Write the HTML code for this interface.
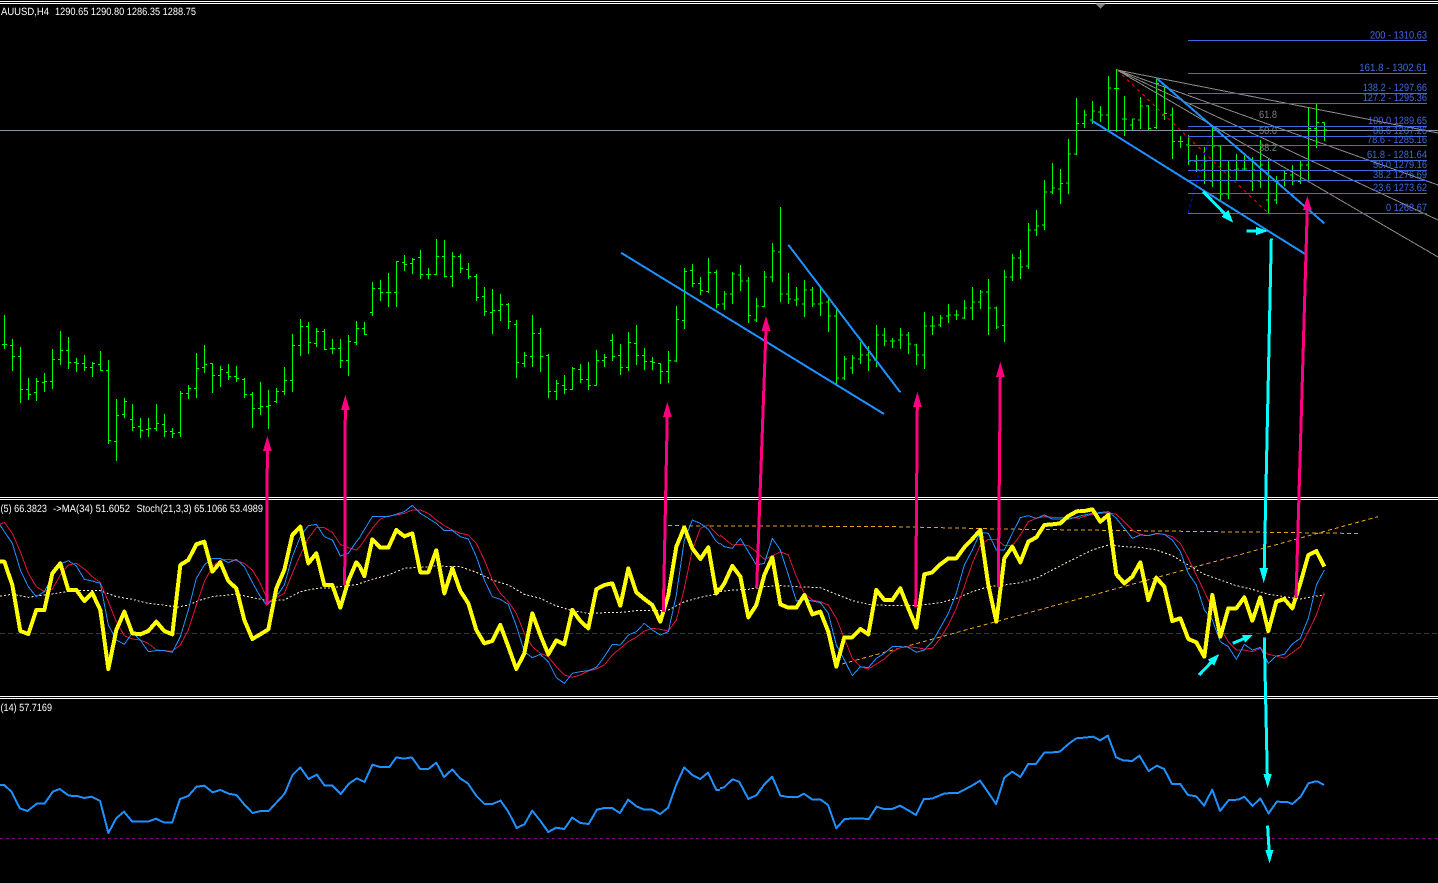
<!DOCTYPE html>
<html lang="en"><head><meta charset="utf-8"><title>AUDUSD H4</title>
<style>
html,body{margin:0;padding:0;background:#000;width:1438px;height:883px;overflow:hidden}
svg{display:block}
text{font-family:"Liberation Sans",sans-serif;font-size:10.5px;text-rendering:geometricPrecision}
.w text{fill:#fff}
.f text{fill:#4169e1}
.g text{fill:#808080}
</style></head><body>
<svg width="1438" height="883" viewBox="0 0 1438 883" xmlns="http://www.w3.org/2000/svg">
<rect width="1438" height="883" fill="#000"/>
<g shape-rendering="crispEdges">
<!-- separators -->
<g stroke="#fff" stroke-width="1">
<path d="M0 1.5H1438M0 3.5H1438M0 497.5H1438M0 499.5H1438M0 696.5H1438M0 698.5H1438"/>
</g>
<polygon points="1095.5,3.5 1105.5,3.5 1100.5,9" fill="#808080"/>
<!-- price line -->
<path d="M0 130.5H1438" stroke="#8494ac" stroke-width="1"/>
<!-- green bars -->
<g fill="none" stroke="#00ff00" stroke-width="3">
<g transform="translate(0 230) scale(.33333)"><path d="M13.5 255V357M6 343h7.5M13.5 343h7.5M37.5 327V423M30 346h7.5M37.5 379h7.5M61.5 351V519M54 379h7.5M61.5 478h7.5M85.5 444V510M78 478h7.5M85.5 493h7.5M109.5 444V513M102 487h7.5M109.5 454h7.5M133.5 429V486M126 457h7.5M133.5 454h7.5M157.5 357V477M150 454h7.5M157.5 388h7.5M181.5 303V405M174 388h7.5M181.5 361h7.5M205.5 321V417M198 361h7.5M205.5 397h7.5M229.5 384V426M222 397h7.5M229.5 400h7.5M253.5 375V423M246 400h7.5M253.5 412h7.5M277.5 396V441M270 412h7.5M277.5 400h7.5M301.5 363V423M294 403h7.5M301.5 421h7.5M325.5 390V642M318 421h7.5M325.5 631h7.5M349.5 507V693M342 634h7.5M349.5 556h7.5M373.5 504V564M366 553h7.5M373.5 514h7.5M397.5 522V603M390 568h7.5M397.5 592h7.5M421.5 564V624M414 589h7.5M421.5 601h7.5M445.5 564V621M438 598h7.5M445.5 595h7.5M469.5 522V603M462 595h7.5M469.5 580h7.5M493.5 552V621M486 583h7.5M493.5 604h7.5M517.5 594V624M510 604h7.5M517.5 610h7.5M541.5 483V621M534 607h7.5M541.5 490h7.5M565.5 465V507M558 490h7.5M565.5 475h7.5M589.5 369V504M582 475h7.5M589.5 415h7.5M613.5 345V429M606 412h7.5M613.5 403h7.5M637.5 399V489M630 400h7.5M637.5 436h7.5M661.5 408V471M654 436h7.5M661.5 418h7.5M685.5 402V450M678 427h7.5M685.5 439h7.5M709.5 408V456M702 439h7.5M709.5 445h7.5M733.5 444V504M726 448h7.5M733.5 493h7.5M757.5 486V594M750 493h7.5M757.5 535h7.5M781.5 456V555M774 535h7.5M781.5 529h7.5M805.5 480V597M798 529h7.5M805.5 526h7.5M829.5 474V519M822 514h7.5M829.5 484h7.5M853.5 411V495M846 484h7.5M853.5 451h7.5M877.5 312V486M870 451h7.5M877.5 346h7.5M901.5 267V378M894 346h7.5M901.5 289h7.5M925.5 276V372M918 289h7.5M925.5 337h7.5M949.5 294V351M942 340h7.5M949.5 304h7.5M973.5 297V360M966 304h7.5M973.5 358h7.5M997.5 327V372M990 355h7.5M997.5 355h7.5M1021.5 327V414M1014 355h7.5M1021.5 391h7.5M1045.5 315V438M1038 391h7.5M1045.5 334h7.5M1069.5 273V345M1062 337h7.5M1069.5 295h7.5"/></g>
<g transform="translate(360 200) scale(.33333)"><path d="M13.5 366V405M6 385h7.5M13.5 403h7.5M37.5 246V348M30 337h7.5M37.5 265h7.5M61.5 240V303M54 265h7.5M61.5 277h7.5M85.5 219V321M78 277h7.5M85.5 277h7.5M109.5 183V321M102 277h7.5M109.5 184h7.5M133.5 165V213M126 187h7.5M133.5 193h7.5M157.5 174V222M150 190h7.5M157.5 178h7.5M181.5 150V237M174 172h7.5M181.5 223h7.5M205.5 204V237M198 223h7.5M205.5 223h7.5M229.5 117V225M222 223h7.5M229.5 169h7.5M253.5 120V233M246 169h7.5M253.5 229h7.5M277.5 156V261M270 229h7.5M277.5 169h7.5M301.5 162V219M294 169h7.5M301.5 205h7.5M325.5 189V237M318 208h7.5M325.5 229h7.5M349.5 222V303M342 229h7.5M349.5 292h7.5M373.5 261V348M366 289h7.5M373.5 334h7.5M397.5 267V402M390 337h7.5M397.5 331h7.5M421.5 282V363M414 331h7.5M421.5 313h7.5M445.5 309V387M438 313h7.5M445.5 364h7.5M469.5 360V534M462 373h7.5M469.5 487h7.5M493.5 456V501M486 490h7.5M493.5 466h7.5M517.5 345V501M510 469h7.5M517.5 400h7.5M541.5 384V516M534 400h7.5M541.5 469h7.5M565.5 462V594M558 466h7.5M565.5 574h7.5M589.5 540V600M582 574h7.5M589.5 550h7.5M613.5 525V582M606 556h7.5M613.5 568h7.5M637.5 501V570M630 568h7.5M637.5 505h7.5M661.5 492V549M654 508h7.5M661.5 538h7.5M685.5 486V570M678 538h7.5M685.5 556h7.5M709.5 450V558M702 556h7.5M709.5 481h7.5M733.5 462V501M726 481h7.5M733.5 472h7.5M757.5 402V483M750 421h7.5M757.5 469h7.5M781.5 432V525M774 466h7.5M781.5 502h7.5M805.5 396V513M798 502h7.5M805.5 427h7.5M829.5 375V495M822 430h7.5M829.5 466h7.5M853.5 444V510M846 466h7.5M853.5 484h7.5M877.5 471V510M870 484h7.5M877.5 487h7.5M901.5 489V552M894 490h7.5M901.5 514h7.5M925.5 453V549M918 514h7.5M925.5 481h7.5M949.5 318V486M942 483h7.5M949.5 358h7.5M973.5 204V387M966 361h7.5M973.5 214h7.5M997.5 192V261M990 211h7.5M997.5 250h7.5M1021.5 231V285M1014 250h7.5M1021.5 271h7.5M1045.5 174V279M1038 274h7.5M1045.5 217h7.5M1069.5 210V325M1062 217h7.5M1069.5 313h7.5"/></g>
<g transform="translate(720 100) scale(.33333)"><path d="M13.5 573V630M6 612h7.5M13.5 582h7.5M37.5 516V612M30 582h7.5M37.5 522h7.5M61.5 495V573M54 525h7.5M61.5 543h7.5M85.5 531V669M78 543h7.5M85.5 646h7.5M109.5 594V666M102 660h7.5M109.5 618h7.5M133.5 513V621M126 619h7.5M133.5 531h7.5M157.5 429V546M150 531h7.5M157.5 453h7.5M181.5 321V606M174 456h7.5M181.5 582h7.5M205.5 519V612M198 582h7.5M205.5 597h7.5M229.5 561V618M222 600h7.5M229.5 597h7.5M253.5 540V651M246 612h7.5M253.5 570h7.5M277.5 561V621M270 570h7.5M277.5 612h7.5M301.5 561V648M294 612h7.5M301.5 609h7.5M325.5 594V696M318 606h7.5M325.5 648h7.5M349.5 624V852M342 648h7.5M349.5 834h7.5M373.5 768V840M366 834h7.5M373.5 777h7.5M397.5 765V822M390 804h7.5M397.5 774h7.5M421.5 726V792M414 777h7.5M421.5 765h7.5M445.5 738V813M438 765h7.5M445.5 780h7.5M469.5 675V801M462 780h7.5M469.5 705h7.5M493.5 684V738M486 705h7.5M493.5 723h7.5M517.5 714V744M510 723h7.5M517.5 723h7.5M541.5 684V747M534 720h7.5M541.5 705h7.5M565.5 696V762M558 705h7.5M565.5 732h7.5M589.5 732V795M582 735h7.5M589.5 765h7.5M613.5 636V807M606 765h7.5M613.5 678h7.5M637.5 648V705M630 678h7.5M637.5 678h7.5M661.5 645V681M654 675h7.5M661.5 654h7.5M685.5 612V669M678 648h7.5M685.5 645h7.5M709.5 630V660M702 645h7.5M709.5 645h7.5M733.5 600V657M726 654h7.5M733.5 624h7.5M757.5 561V660M750 624h7.5M757.5 606h7.5M781.5 570V627M774 606h7.5M781.5 576h7.5M805.5 537V705M798 576h7.5M805.5 624h7.5M829.5 620V687M822 624h7.5M829.5 681h7.5M853.5 510V726M846 676h7.5M853.5 531h7.5M877.5 462V543M870 531h7.5M877.5 474h7.5M901.5 450V537M894 474h7.5M901.5 501h7.5M925.5 369V507M918 498h7.5M925.5 390h7.5M949.5 330V408M942 390h7.5M949.5 378h7.5M973.5 240V390M966 375h7.5M973.5 276h7.5M997.5 189V282M990 276h7.5M997.5 264h7.5M1021.5 207V312M1014 267h7.5M1021.5 250h7.5M1045.5 117V282M1038 249h7.5M1045.5 162h7.5M1069.5 -6V165M1062 162h7.5M1069.5 70h7.5"/></g>
<g transform="translate(1080 0) scale(.33333)"><path d="M13.5 330V384M6 370h7.5M13.5 345h7.5M37.5 303V372M30 360h7.5M37.5 333h7.5M61.5 318V366M54 336h7.5M61.5 345h7.5M85.5 228V393M78 345h7.5M85.5 264h7.5M109.5 207V396M102 265h7.5M109.5 265h7.5M133.5 288V408M126 357h7.5M133.5 357h7.5M157.5 357V390M150 375h7.5M157.5 357h7.5M181.5 291V387M174 360h7.5M181.5 318h7.5M205.5 315V390M198 318h7.5M205.5 386h7.5M229.5 235V387M222 383h7.5M229.5 250h7.5M253.5 262V360M246 345h7.5M253.5 340h7.5M277.5 322V477M270 345h7.5M277.5 424h7.5M301.5 408V444M294 424h7.5M301.5 424h7.5M325.5 405V495M318 435h7.5M325.5 483h7.5M349.5 465V516M342 483h7.5M349.5 510h7.5M373.5 441V552M366 510h7.5M373.5 483h7.5M397.5 381V561M390 543h7.5M397.5 438h7.5M421.5 438V600M414 438h7.5M421.5 582h7.5M445.5 483V597M438 582h7.5M445.5 510h7.5M469.5 462V540M462 510h7.5M469.5 507h7.5M493.5 465V510M486 507h7.5M493.5 507h7.5M517.5 471V573M510 543h7.5M517.5 510h7.5M541.5 420V564M534 543h7.5M541.5 495h7.5M565.5 477V639M558 600h7.5M565.5 510h7.5M589.5 528V612M582 600h7.5M589.5 543h7.5M613.5 510V560M606 540h7.5M613.5 520h7.5M637.5 495V555M630 525h7.5M637.5 543h7.5M661.5 480V552M654 544h7.5M661.5 495h7.5M685.5 324V540M678 495h7.5M685.5 385h7.5M709.5 312V444M702 385h7.5M709.5 368h7.5M733.5 367V423M726 367h7.5M733.5 390h7.5"/></g>
</g>
<!-- fan -->
<g stroke="#8a8a8a" stroke-width="1" fill="none">
<path d="M1117 70L1438 133M1117 70L1438 185M1117 70L1438 220M1117 70L1438 257"/>
</g>
<path d="M1117 70L1268 213" stroke="#ff0000" stroke-width="1" stroke-dasharray="3 4" fill="none"/>
<path d="M1188 213L1212 128" stroke="#0000ff" stroke-width="1" stroke-dasharray="3 3" fill="none"/>
<!-- fib levels -->
<path d="M1188 40.5H1427M1188 73.5H1427M1188 93.5H1427M1188 103.5H1427M1188 126.5H1427M1188 136.5H1427M1188 145.5H1427M1188 160.5H1427M1188 170.5H1427M1188 180.5H1427M1188 193.5H1427M1188 213.5H1427" stroke="#4169e1" stroke-width="1"/>
<!-- trend lines -->
<g stroke="#1e90ff" stroke-width="2" fill="none">
<path d="M1092 120.7L1306.7 255M1156.7 78.3L1324.3 223.3M621 252.7L884 414M788.3 244.7L900.3 392.3"/>
</g>
<!-- level lines -->
<path d="M0 633.5H1438" stroke="#800080" stroke-width="1" stroke-dasharray="5 3"/>
<path d="M0 838.5H1438" stroke="#800080" stroke-width="1" stroke-dasharray="3 3"/>
<!-- orange dashed -->
<g stroke="#e8a020" stroke-width="1" fill="none" stroke-dasharray="4 3">
<path d="M668 525.7L886 526.5L1000 529L1361 533.5M842 664L1378 516.7"/>
</g>
<!-- stochastic panel -->
<g fill="none" stroke-linejoin="round">
<g transform="translate(0 495) scale(.33333)">
<polyline stroke="#ffe4c4" stroke-width="3" stroke-dasharray="6 6" points="0,303 37,298 85,307 133,300 181,293 229,287 301,287 349,305 397,313 445,325 493,330 529,337 565,330 601,315 637,305 709,297 757,308 805,317 853,315 901,290 949,280 997,278 1045,272 1080,267"/>
<polyline stroke="#dc143c" stroke-width="3" points="0,88 13,82 37,115 61,170 85,235 109,275 133,290 157,282 181,240 205,210 229,205 253,222 277,245 301,263 325,320 349,380 373,422 397,432 421,435 445,445 469,465 493,467 517,468 541,450 565,405 589,330 613,260 637,215 661,195 685,193 709,197 733,205 757,225 781,265 805,320 829,308 853,295 877,235 901,180 925,130 949,98 973,98 997,112 1021,148 1045,158 1069,165 1080,155"/>
<polyline stroke="#1e90ff" stroke-width="3" points="0,90 13,110 37,145 61,225 85,275 109,305 133,290 157,245 181,207 205,197 229,213 253,253 277,258 301,265 325,390 349,435 373,448 397,413 421,435 445,470 469,467 493,467 517,472 541,425 565,345 589,250 613,210 637,190 661,190 685,203 709,193 733,215 757,262 781,305 800,330 829,305 853,270 877,185 901,125 925,92 949,88 973,125 997,135 1021,183 1045,175 1069,140 1080,127"/>
<polyline stroke="#ffff00" stroke-width="12" points="0,200 13,200 37,270 61,408 85,417 109,345 133,345 157,235 181,205 205,285 229,285 253,318 277,294 301,345 325,522 349,405 373,350 397,415 421,418 445,408 469,380 493,408 517,418 541,210 565,195 589,148 613,140 637,230 661,202 685,258 709,280 733,375 757,432 781,418 805,403 829,280 853,225 877,120 901,95 925,205 949,175 973,270 997,270 1021,338 1045,258 1069,202 1080,215"/>
</g>
<g transform="translate(360 495) scale(.33333)">
<polyline stroke="#ffe4c4" stroke-width="3" stroke-dasharray="6 6" points="0,265 37,253 85,240 133,220 181,217 229,213 301,215 349,232 397,255 445,270 493,298 541,310 589,333 637,347 685,355 733,353 781,352 829,347 877,347 925,345 973,320 1021,307 1080,295"/>
<polyline stroke="#dc143c" stroke-width="3" points="0,155 37,100 61,72 85,63 109,60 133,55 157,45 181,45 205,55 229,75 253,92 277,105 301,115 325,120 349,145 373,195 397,255 421,295 445,320 469,355 493,415 517,455 541,475 565,485 589,515 613,540 637,547 661,540 685,528 709,522 733,510 757,480 781,460 805,440 829,427 853,408 877,400 901,403 925,408 949,375 973,280 997,165 1021,100 1045,90 1069,115 1080,125"/>
<polyline stroke="#1e90ff" stroke-width="3" points="0,125 37,65 85,65 133,50 157,31 181,55 229,85 253,107 277,107 301,125 325,132 349,185 373,255 397,305 421,313 445,328 469,393 493,470 517,488 541,478 565,500 589,548 613,565 637,535 661,530 685,527 709,517 733,485 757,448 781,450 805,420 829,410 853,385 877,405 901,420 925,410 949,300 973,135 997,75 1021,85 1045,103 1069,140 1080,147"/>
<polyline stroke="#ffff00" stroke-width="12" points="0,215 13,243 37,133 61,158 85,158 109,105 133,124 157,115 181,232 205,232 229,166 253,295 277,220 301,288 325,325 349,405 373,445 397,438 421,390 445,455 469,522 493,475 517,355 541,420 565,478 589,436 613,448 637,345 661,378 685,400 709,283 733,270 757,265 781,332 805,220 829,292 853,312 877,330 901,380 925,300 949,155 973,97 997,160 1021,192 1045,157 1069,295 1080,280"/>
</g>
<g transform="translate(720 495) scale(.33333)">
<polyline stroke="#ffe4c4" stroke-width="3" stroke-dasharray="6 6" points="0,290 37,285 85,283 133,275 181,272 229,275 301,278 349,298 397,317 445,328 517,332 589,332 661,323 709,310 757,290 805,275 853,270 901,263 949,250 997,225 1045,200 1080,183"/>
<polyline stroke="#dc143c" stroke-width="3" points="0,120 37,150 61,148 85,152 109,170 133,193 157,183 181,170 205,180 229,245 253,295 277,315 301,320 325,330 349,370 373,430 397,490 421,515 445,522 469,507 493,492 517,470 541,458 565,455 589,458 613,462 637,460 661,430 685,390 709,340 733,275 757,205 781,150 805,133 829,133 853,152 877,152 901,120 925,80 949,70 973,65 997,67 1045,68 1080,70"/>
<polyline stroke="#1e90ff" stroke-width="3" points="0,145 13,155 37,160 61,130 85,170 109,210 133,205 157,130 181,165 205,240 229,318 253,313 277,318 301,323 325,355 349,450 373,495 397,542 421,515 445,518 469,490 493,475 517,455 541,455 565,457 589,472 613,465 637,440 661,398 685,355 709,295 733,210 757,165 781,112 805,115 829,165 853,165 877,115 901,68 925,62 949,70 973,60 997,72 1045,73 1080,63"/>
<polyline stroke="#ffff00" stroke-width="12" points="0,285 13,265 37,213 61,245 85,367 109,330 133,240 157,187 181,328 205,338 229,338 253,300 277,358 301,350 325,410 349,515 373,427 397,427 421,402 445,418 469,285 493,315 517,315 541,280 565,340 589,398 613,238 637,232 661,208 685,190 709,190 733,157 757,132 781,105 805,270 829,380 853,190 877,155 901,202 925,140 949,127 973,90 997,88 1021,85 1045,63 1069,50 1080,47"/>
</g>
<g transform="translate(1080 495) scale(.33333)">
<polyline stroke="#ffe4c4" stroke-width="3" stroke-dasharray="6 6" points="0,183 37,165 85,150 133,155 181,157 229,165 277,182 325,210 373,238 421,255 469,272 517,283 565,298 613,305 661,312 709,303 733,300"/>
<polyline stroke="#dc143c" stroke-width="3" points="0,68 37,58 85,53 109,58 133,80 157,105 181,118 205,122 229,117 253,118 277,125 301,145 325,190 349,240 373,290 397,340 421,400 445,440 469,465 493,465 517,470 541,460 565,478 589,483 613,490 637,473 661,455 685,410 709,360 733,292"/>
<polyline stroke="#1e90ff" stroke-width="3" points="0,63 37,55 85,50 109,70 133,100 157,130 181,120 205,122 229,115 253,118 277,135 301,170 325,235 349,270 373,345 397,375 421,440 445,455 469,493 493,448 517,465 541,457 565,505 589,483 613,478 637,447 661,430 685,370 709,270 733,225"/>
<polyline stroke="#ffff00" stroke-width="12" points="0,48 13,48 37,43 61,80 85,60 109,238 133,265 157,245 181,202 205,315 229,248 253,275 277,378 301,370 325,432 349,442 373,485 397,300 421,425 445,340 469,340 493,307 517,377 541,307 565,408 589,320 613,312 637,340 661,265 685,180 709,168 733,215"/>
</g>
</g>
<!-- RSI -->
<g fill="none" stroke="#1e90ff" stroke-linejoin="round">
<g transform="translate(0 695) scale(.45918 .33333)">
<polyline vector-effect="non-scaling-stroke" stroke-width="2" points="0,270 9,270 25,290 43,340 60,348 80,326 97,326 115,290 130,282 150,302 168,303 183,309 200,305 218,318 236,414 253,370 270,350 288,380 322,380 340,371 358,383 375,383 392,312 410,303 428,275 445,272 463,292 480,285 498,296 515,300 533,330 550,354 568,348 585,348 620,296 637,240 654,217 672,252 690,239 707,272 724,272 742,297 760,266 777,250 794,261 811,209 828,216 848,216 863,187 880,191 897,187 915,222 933,222 950,203 967,246 985,223 1002,250 1019,265 1037,302 1055,327 1072,327 1090,317 1107,350 1125,399 1142,388 1159,347 1177,378 1194,411 1211,398 1229,402 1246,368 1264,384 1282,387 1300,344 1316,339 1333,339 1350,354 1368,314 1386,334 1403,344 1420,344 1438,357 1455,338 1473,268 1490,217 1508,240 1525,252 1542,233 1560,285 1568,285"/>
</g>
<g transform="translate(720 695) scale(.45791 .33333)">
<polyline vector-effect="non-scaling-stroke" stroke-width="2" points="0,280 9,277 27,253 42,260 62,312 80,300 97,268 114,245 132,302 148,306 170,306 183,296 202,314 220,314 236,330 254,400 272,372 298,370 325,372 342,335 358,342 376,342 393,332 410,345 428,360 445,312 463,311 491,295 520,294 550,272 568,257 603,327 621,248 638,230 656,246 673,207 690,207 708,173 726,172 742,170 760,148 778,130 795,128 815,125 830,136 847,122 865,187 880,196 900,198 916,182 936,228 954,212 970,222 987,267 1005,267 1022,300 1040,304 1057,332 1075,284 1092,348 1111,315 1132,314 1145,305 1163,333 1180,310 1198,355 1216,320 1238,321 1250,327 1268,305 1285,265 1298,260 1306,260 1319,270"/>
</g>
</g>
<!-- pink arrows -->
<g stroke="#ff0080" stroke-width="3" fill="#ff0080">
<path d="M267 605L267.3 448M344.7 585L345.3 408M663.3 612L667.3 414M756.7 587L766 329M915.7 607L917.3 405M998.3 587L1000.3 374M1296 598L1307.3 208" fill="none"/>
</g>
<g fill="#ff0080">
<polygon points="267.3,436 271.8,451 263,451"/>
<polygon points="345.3,395 349.8,410 341,410"/>
<polygon points="667.3,402 671.8,417 663,417"/>
<polygon points="766,316 770.5,331 761.5,331"/>
<polygon points="917.3,392 921.8,407 913,407"/>
<polygon points="1000.3,362 1004.8,377 996,377"/>
<polygon points="1307.3,196 1311.8,210 1303,210"/>
</g>
<!-- cyan arrows -->
<g stroke="#00ffff" stroke-width="3" fill="none">
<path d="M1203.3 191.7L1226 215M1246.7 231H1258M1271.3 238.3L1264.2 570M1199 675L1212 661.5M1232.7 643.3L1245 638.2M1264.3 637.7L1267.3 775M1267.6 825.7L1269.2 852"/>
</g>
<g fill="#00ffff">
<polygon points="1233.3,222.7 1221.7,216.7 1228.3,210"/>
<polygon points="1268.5,231 1256,227 1256,235"/>
<polygon points="1263.7,583 1259.5,568 1268,568"/>
<polygon points="1219.3,654 1214.2,665.7 1207.8,659.5"/>
<polygon points="1252.7,635 1245,642.5 1242,635.1"/>
<polygon points="1267.7,788 1263.4,774 1271.8,774"/>
<polygon points="1269.6,863.3 1265.2,850 1273.5,850"/>
</g>
</g>
<!-- text -->
<g class="w">
<text x="1" y="15" textLength="48" lengthAdjust="spacingAndGlyphs">AUUSD,H4</text>
<text x="55" y="15" textLength="141" lengthAdjust="spacingAndGlyphs">1290.65 1290.80 1286.35 1288.75</text>
<text x="0.5" y="512" textLength="46.5" lengthAdjust="spacingAndGlyphs">(5) 66.3823</text>
<text x="53" y="512" textLength="77" lengthAdjust="spacingAndGlyphs">-&gt;MA(34) 51.6052</text>
<text x="136.5" y="512" textLength="126.5" lengthAdjust="spacingAndGlyphs">Stoch(21,3,3) 65.1066 53.4989</text>
<text x="0.5" y="711" textLength="51.5" lengthAdjust="spacingAndGlyphs">(14) 57.7169</text>
</g>
<g class="f">
<text x="1370" y="38.5" textLength="57" lengthAdjust="spacingAndGlyphs">200 - 1310.63</text>
<text x="1359.3" y="71" textLength="67.7" lengthAdjust="spacingAndGlyphs">161.8 -  1302.61</text>
<text x="1362.7" y="91" textLength="64.3" lengthAdjust="spacingAndGlyphs">138.2 - 1297.66</text>
<text x="1362.7" y="101" textLength="64.3" lengthAdjust="spacingAndGlyphs">127.2 - 1295.36</text>
<text x="1368" y="124" textLength="59" lengthAdjust="spacingAndGlyphs">100.0 1289.65</text>
<text x="1373" y="134" textLength="54" lengthAdjust="spacingAndGlyphs">88.6 1287.26</text>
<text x="1367" y="143" textLength="60" lengthAdjust="spacingAndGlyphs">78.6 - 1285.16</text>
<text x="1367" y="158" textLength="60" lengthAdjust="spacingAndGlyphs">61.8 - 1281.64</text>
<text x="1373" y="168" textLength="54" lengthAdjust="spacingAndGlyphs">50.0 1279.16</text>
<text x="1373" y="178" textLength="54" lengthAdjust="spacingAndGlyphs">38.2 1276.69</text>
<text x="1373" y="191" textLength="54" lengthAdjust="spacingAndGlyphs">23.6 1273.62</text>
<text x="1386" y="211" textLength="41" lengthAdjust="spacingAndGlyphs">0 1268.67</text>
</g>
<g class="g">
<text x="1259" y="118" textLength="18" lengthAdjust="spacingAndGlyphs">61.8</text>
<text x="1259" y="134" textLength="18" lengthAdjust="spacingAndGlyphs">50.0</text>
<text x="1259" y="151" textLength="18" lengthAdjust="spacingAndGlyphs">38.2</text>
</g>
</svg>
</body></html>
